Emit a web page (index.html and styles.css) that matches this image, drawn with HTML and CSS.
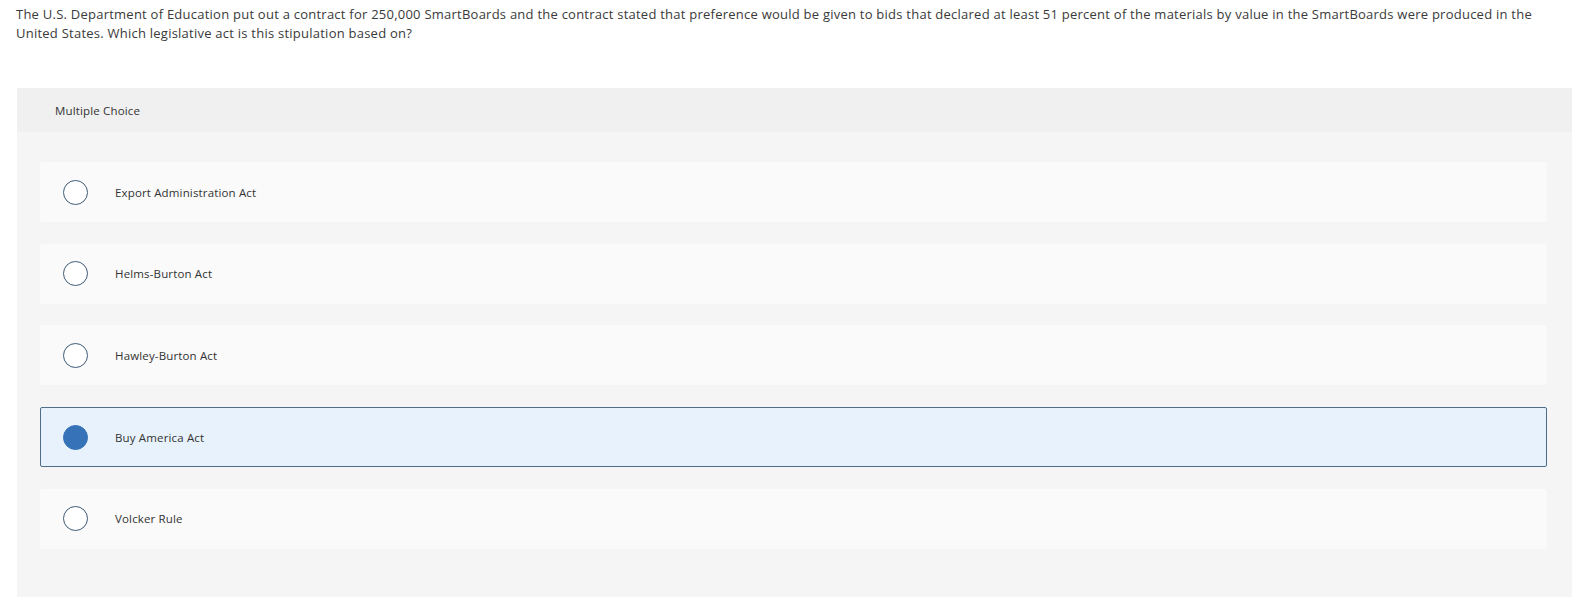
FILE: index.html
```html
<!DOCTYPE html>
<html lang="en">
<head>
<meta charset="utf-8">
<title>Multiple Choice</title>
<link rel="stylesheet" href="styles.css">
</head>
<body>
<div class="page">
  <p class="question">The U.S. Department of Education put out a contract for 250,000 SmartBoards and the contract stated that preference would be given to bids that declared at least 51 percent of the materials by value in the SmartBoards were produced in the United States. Which legislative act is this stipulation based on?</p>
  <section class="mc">
    <div class="mc-header">Multiple Choice</div>
    <div class="mc-body">
      <div class="option"><span class="radio"></span><span class="label">Export Administration Act</span></div>
      <div class="option"><span class="radio"></span><span class="label">Helms-Burton Act</span></div>
      <div class="option"><span class="radio"></span><span class="label">Hawley-Burton Act</span></div>
      <div class="option selected"><span class="radio"></span><span class="label">Buy America Act</span></div>
      <div class="option"><span class="radio"></span><span class="label">Volcker Rule</span></div>
    </div>
  </section>
</div>
</body>
</html>
```
FILE: styles.css
```css
html, body {
  margin: 0;
  padding: 0;
  background: #ffffff;
}
body {
  font-family: "Open Sans", "Liberation Sans", sans-serif;
  color: #333333;
}
.page {
  padding: 5px 18px 0 16px;
}
.question {
  margin: 0;
  max-width: 1535px;
  font-size: 13px;
  letter-spacing: 0.24px;
  line-height: 19px;
  color: #3a3a3a;
}
.mc {
  margin: 45px 0 0 1px;
  width: 1555px;
}
.mc-header {
  height: 44px;
  display: flex;
  align-items: center;
  padding-left: 38px;
  background: #f0f0f0;
  font-size: 11.5px;
  letter-spacing: 0.15px;
  color: #333333;
}
.mc-body {
  background: #f5f5f5;
  padding: 30px 25px 48px 23px;
  display: flex;
  flex-direction: column;
  gap: 21.7px;
}
.option {
  height: 60px;
  box-sizing: border-box;
  display: flex;
  align-items: center;
  background: #fafafa;
  border: 1px solid transparent;
  border-radius: 2px;
  padding-left: 22px;
  font-size: 11.5px;
  letter-spacing: 0.15px;
  color: #333333;
}
.radio {
  width: 25px;
  height: 25px;
  box-sizing: border-box;
  border-radius: 50%;
  border: 1.5px solid #3d5a75;
  background: #ffffff;
  flex: none;
}
.label {
  margin-left: 27px;
}
.option.selected {
  background: #e8f2fc;
  border-color: #4f6d88;
}
.option.selected .radio {
  background: #3572b8;
  border-color: #3572b8;
}
```
